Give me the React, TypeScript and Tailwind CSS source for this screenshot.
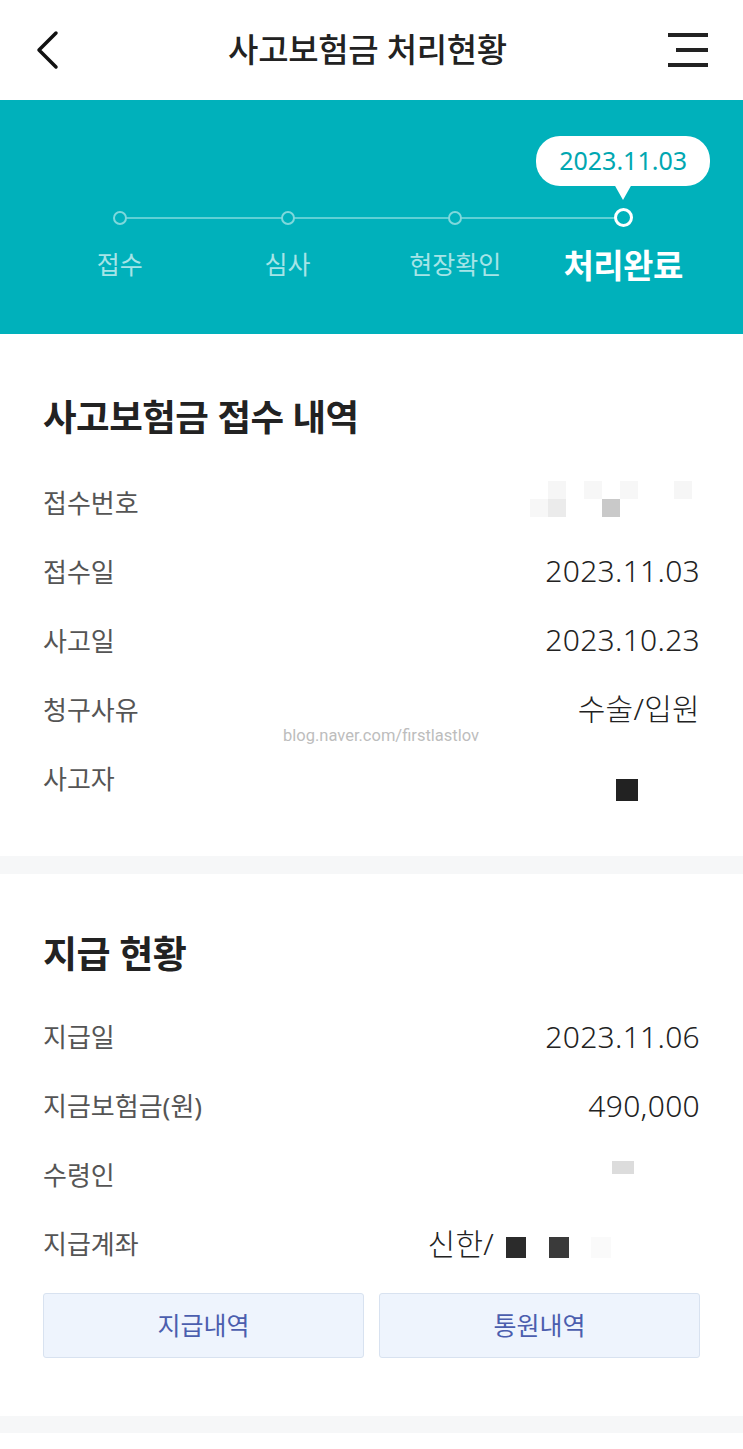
import { ReactNode } from 'react';

const font = { fontFamily: '"Noto Sans", "Noto Sans CJK KR", sans-serif' };

const steps = ['접수', '심사', '현장확인', '처리완료'];

function Row({ label, children }: { label: string; children: ReactNode }) {
  return (
    <div className="flex items-center justify-between h-[69px]">
      <span className="text-[26px] text-[#555]">{label}</span>
      <div className="text-[30px] font-light text-[#222] tracking-[0.3px] flex items-center -mt-[3px]">{children}</div>
    </div>
  );
}

function Sq({ className }: { className: string }) {
  return <span className={`inline-block ${className}`} />;
}

export default function App() {
  return (
    <div className="w-[743px] min-h-[1449px] bg-white relative" style={font}>
      {/* header */}
      <div className="h-[100px] flex items-center justify-between px-[34px]">
        <svg width="26" height="40" viewBox="0 0 26 40">
          <path d="M22 3 L5 20 L22 37" fill="none" stroke="#111" strokeWidth="3.5" strokeLinecap="round" strokeLinejoin="round" />
        </svg>
        <h1 className="text-[33px] font-medium text-[#222] tracking-[-0.3px] ml-[8px]">사고보험금 처리현황</h1>
        <svg width="42" height="36" viewBox="0 0 42 36">
          <rect x="1" y="1" width="40" height="4" fill="#222" />
          <rect x="9" y="16" width="32" height="4" fill="#222" />
          <rect x="1" y="31" width="40" height="4" fill="#222" />
        </svg>
      </div>

      {/* progress */}
      <div className="h-[234px] bg-[#00b1bb] pt-[36px]">
        <div className="grid grid-cols-4 px-[36px] relative">
          <div className="absolute left-[120px] right-[119px] top-[81px] h-[2px] bg-[#5fd0d5]" />
          {steps.map((s, i) => {
            const last = i === steps.length - 1;
            return (
              <div key={s} className="flex flex-col items-center relative">
                <div className="h-[72px] flex items-start justify-center">
                  {last && (
                    <div className="relative">
                      <div className="bg-white rounded-[24px] h-[50px] w-[174px] flex items-center justify-center text-[25px] text-[#00a7b1]">
                        2023.11.03
                      </div>
                      <div className="absolute left-1/2 -translate-x-1/2 top-[48px] w-0 h-0 border-l-[9px] border-r-[9px] border-t-[16px] border-l-transparent border-r-transparent border-t-white" />
                    </div>
                  )}
                </div>
                <div
                  className={
                    last
                      ? 'w-[19px] h-[19px] rounded-full border-[3.5px] border-white bg-[#00b1bb] z-10'
                      : 'w-[14px] h-[14px] rounded-full border-2 border-[#7fd8dc] bg-[#00b1bb] z-10 my-[2.5px]'
                  }
                />
                <div
                  className={
                    last
                      ? 'mt-[14px] text-[33px] font-bold text-white tracking-[-0.5px]'
                      : 'mt-[19px] text-[25px] text-[#a6e4e7]'
                  }
                >
                  {s}
                </div>
              </div>
            );
          })}
        </div>
      </div>

      {/* section 1 */}
      <div className="px-[43px] pt-[56px] pb-[42px]">
        <h2 className="text-[36.5px] font-bold text-[#222] tracking-[-0.5px] mb-[24px]">사고보험금 접수 내역</h2>
        <Row label="접수번호">
          <div className="grid grid-cols-[18px_18px_18px_18px_18px_18px_18px_18px_18px] grid-rows-[18px_18px] w-[170px] h-[36px] -mt-[5px]">
            <Sq className="bg-white" />
            <Sq className="bg-[#f6f6f6]" />
            <Sq className="bg-white" />
            <Sq className="bg-[#f7f7f7]" />
            <Sq className="bg-white" />
            <Sq className="bg-[#f7f7f7]" />
            <Sq className="bg-white" />
            <Sq className="bg-white" />
            <Sq className="bg-[#f6f6f6]" />
            <Sq className="bg-[#f7f7f7]" />
            <Sq className="bg-[#ebebeb]" />
            <Sq className="bg-white" />
            <Sq className="bg-white" />
            <Sq className="bg-[#c9c9c9]" />
            <Sq className="bg-white" />
            <Sq className="bg-white" />
            <Sq className="bg-white" />
            <Sq className="bg-white" />
          </div>
        </Row>
        <Row label="접수일">2023.11.03</Row>
        <Row label="사고일">2023.10.23</Row>
        <Row label="청구사유">수술/입원</Row>
        <Row label="사고자">
          <Sq className="w-[22px] h-[22px] bg-[#222] mr-[62px] mt-[25px]" />
        </Row>
      </div>

      <div className="absolute left-[283px] top-[724px] text-[16.5px] text-[#bdbdbd]" style={{ fontFamily: 'Roboto, sans-serif' }}>
        blog.naver.com/firstlastlov
      </div>

      <div className="h-[18px] bg-[#f6f7f8]" />

      {/* section 2 */}
      <div className="px-[43px] pt-[52px] pb-[58px]">
        <h2 className="text-[37px] font-bold text-[#222] tracking-[-0.5px] mb-[22px]">지급 현황</h2>
        <Row label="지급일">2023.11.06</Row>
        <Row label="지금보험금(원)">490,000</Row>
        <Row label="수령인">
          <Sq className="w-[22px] h-[13px] bg-[#dcdcdc] mr-[66px] -mt-[13px]" />
        </Row>
        <Row label="지급계좌">
          <span>신한/</span>
          <Sq className="w-[20px] h-[21px] bg-[#2b2b2b] ml-[12px] mt-[9px]" />
          <Sq className="w-[20px] h-[21px] bg-[#3a3a3a] ml-[23px] mt-[9px]" />
          <Sq className="w-[20px] h-[21px] bg-[#fafafa] ml-[22px] mt-[9px] mr-[89px]" />
        </Row>
        <div className="grid grid-cols-2 gap-[15px] mt-[14px]">
          <button className="h-[65px] bg-[#eef4fd] border border-[#d8e2f0] rounded-[3px] text-[25px] text-[#4b5eae]">지급내역</button>
          <button className="h-[65px] bg-[#eef4fd] border border-[#d8e2f0] rounded-[3px] text-[25px] text-[#4b5eae]">통원내역</button>
        </div>
      </div>

      <div className="h-[17px] bg-[#f6f7f8]" />
    </div>
  );
}
